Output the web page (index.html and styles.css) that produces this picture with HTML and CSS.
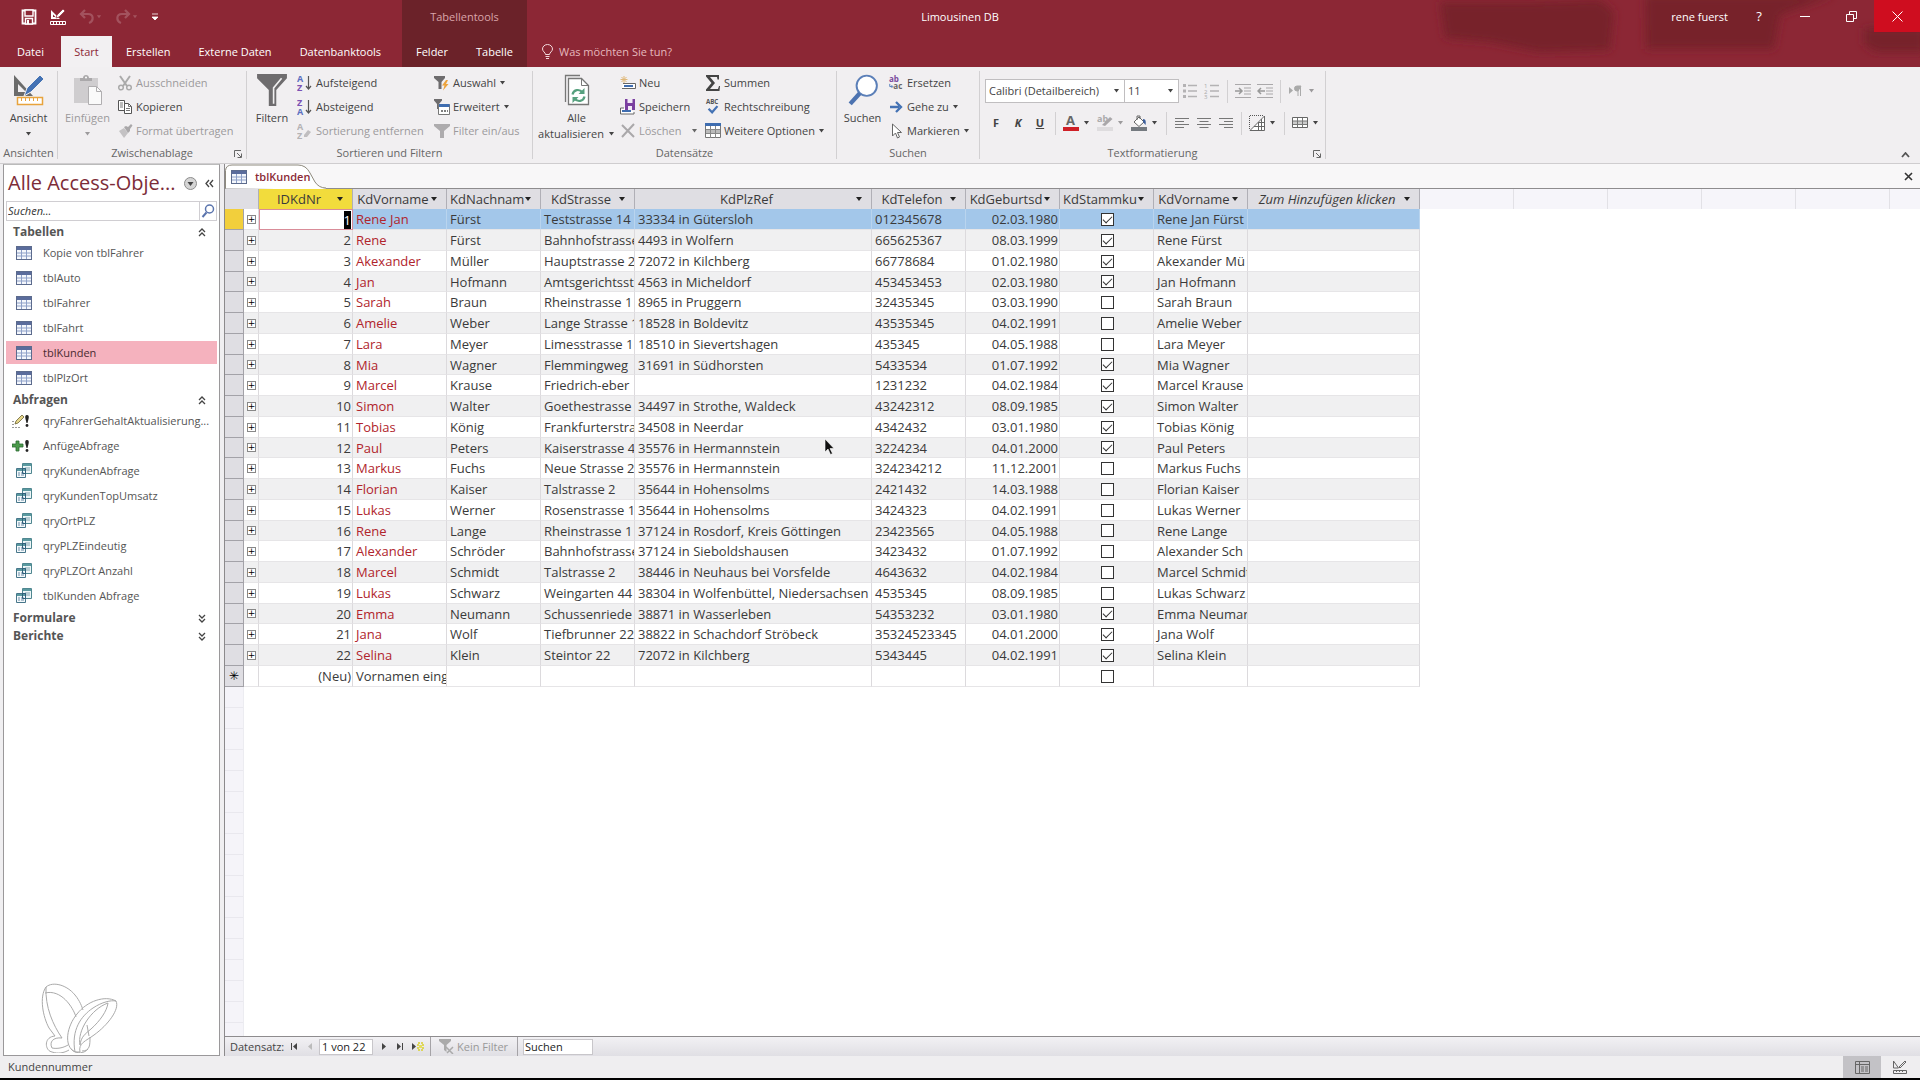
FILE: index.html
```html
<!DOCTYPE html>
<html lang="de">
<head>
<meta charset="utf-8">
<title>Limousinen DB</title>
<link rel="stylesheet" href="styles.css">
</head>
<body>
<svg class="sprite" aria-hidden="true">
  <symbol id="i-table" viewBox="0 0 16 14"><rect x=".5" y=".5" width="15" height="13" fill="#f4f7fc" stroke="#5c6b8d"/><path d="M1 1h14v3H1z" fill="#5a6c9c"/><path d="M1 7h14M1 10h14M5.5 4v9M10.500 4v9" stroke="#8da0c8" fill="none"/></symbol>
  <symbol id="i-query" viewBox="0 0 16 16"><path d="M6.500.5h9v10h-9z" fill="#eef6f8" stroke="#4f8790"/><path d="M7 1h8v2H7z" fill="#5a9aa0"/><path d="M9 5h5M9 7h5" stroke="#7fa3ae"/><path d="M.5 5.500h9v9h-9z" fill="#f4f9fb" stroke="#47768a"/><path d="M1 6h8v2H1z" fill="#5a9aa0"/><path d="M2 10h2m1 0h3M2 12h2m1 0h3" stroke="#6b8ba6"/><path d="M6.500 5.500h3v5h-3z" fill="none" stroke="#2f5f7a"/></symbol>
  <symbol id="i-upd" viewBox="0 0 18 16"><path d="M1 8v1M1 11v1M1 14v1M4 14v1M7 14v1" stroke="#333" fill="none"/><path d="m3 11 1-3 6-6 2 2-6 6z" fill="#e6d68a" stroke="#6a6236" stroke-width=".8"/><path d="M15 2c2 0 2 2 1.500 4L15.500 10h-1L13.500 6C13 4 13 2 15 2z" fill="#222"/><circle cx="15" cy="12.500" r="1.400" fill="#222"/></symbol>
  <symbol id="i-app" viewBox="0 0 18 16"><path d="M4 3h3v3h4v3H7v4H4V9H0V6h4z" fill="#4b9a4b" stroke="#2c6a32" stroke-width=".8"/><path d="M15 2c2 0 2 2 1.500 4L15.500 10h-1L13.500 6C13 4 13 2 15 2z" fill="#222"/><circle cx="15" cy="12.500" r="1.400" fill="#222"/></symbol>
  <symbol id="i-caret" viewBox="0 0 7 4"><path d="M1 0h5L3.500 3.500z" fill="currentColor"/></symbol>
  <symbol id="i-up" viewBox="0 0 8 9"><path d="m1 4 3-3 3 3M1 8l3-3 3 3" fill="none" stroke="#444" stroke-width="1.300"/></symbol>
  <symbol id="i-down" viewBox="0 0 8 9"><path d="m1 1 3 3 3-3M1 5l3 3 3-3" fill="none" stroke="#444" stroke-width="1.300"/></symbol>
  <symbol id="i-save" viewBox="0 0 16 16"><path d="M1.500 1.500h13v13h-13z" fill="none" stroke="currentColor" stroke-width="1.800"/><path d="M4 1h8v6H4zM4.500 9.500h7V15h-7z" fill="#8c2735" stroke="currentColor" stroke-width="1.400"/><path d="M6 11h2v4H6z" fill="currentColor"/></symbol>
  <symbol id="i-design" viewBox="0 0 16 16"><path d="M1 1v9h9zM3 5.500 5.500 8H3z" fill="currentColor" fill-rule="evenodd"/><path d="m6 9 1-3 6-6 2 2-6 6z" fill="currentColor" stroke="#8c2735" stroke-width=".7"/><path d="M.5 12.500h15v3H.5zM3.500 13v2m3-2v2m3-2v2m3-2v2" fill="none" stroke="currentColor"/></symbol>
  <symbol id="i-undo" viewBox="0 0 16 16"><path d="M6 1 2 5l4 4M2.500 5H9c6 0 6 7 1 9" fill="none" stroke="currentColor" stroke-width="2.200"/></symbol>
  <symbol id="i-view" viewBox="0 0 32 32"><path d="M1 1v21h19zM5 10l8 8H5z" fill="#6b6b6b" fill-rule="evenodd"/><path d="m11 22 3-8L27 1l4 4-13 13z" fill="#4472b4" stroke="#f0eff0"/><path d="M4.500 23.500h25v7h-25z" fill="#fff" stroke="#e8a33d" stroke-width="1.500"/><path d="M8.500 24v3m4-3v3m4-3v3m4-3v3m4-3v3" stroke="#e8a33d"/></symbol>
  <symbol id="i-paste" viewBox="0 0 32 32"><path d="M2 4h24v25H2z" fill="#cfcdcf"/><path d="M8 7V4h3c0-4 6-4 6 0h3v3z" fill="#aaa8aa"/><circle cx="14" cy="3.500" r="1" fill="#fff"/><path d="M16.500 12.500h8l5 5v13h-13z" fill="#fafafa" stroke="#b0aeb0"/><path d="M24.500 12.500v5h5" fill="none" stroke="#b0aeb0"/></symbol>
  <symbol id="i-cut" viewBox="0 0 16 16"><path d="M3 1l7 10M13 1 6 11" stroke="#aaa" stroke-width="2" fill="none"/><circle cx="4" cy="12.500" r="2.300" fill="none" stroke="#aaa" stroke-width="1.500"/><circle cx="12" cy="12.500" r="2.300" fill="none" stroke="#aaa" stroke-width="1.500"/></symbol>
  <symbol id="i-copy" viewBox="0 0 16 16"><path d="M1.500 1.500h6v10h-6z" fill="#fff" stroke="#555"/><path d="M3 4h3M3 6h3M3 8h3" stroke="#777"/><path d="M7.500 4.500h4l3 3v7h-7z" fill="#fff" stroke="#555"/><path d="M11.500 4.500v3h3M9 9.500h4M9 11.500h4" fill="none" stroke="#777"/></symbol>
  <symbol id="i-brush" viewBox="0 0 16 16"><path d="m2 8 5-3 4 5-4 5z" fill="#c4c2c4"/><path d="m7 4 2-1 2 1 3-3 1.500 1.500L13 6v2l-2 2z" fill="#a9a7a9"/></symbol>
  <symbol id="i-filter" viewBox="0 0 28 30"><path d="M0 0h28v4L18 15v15h-7V15L0 4z" fill="#6e6c6e"/><path d="M23 4 15.500 13v15" fill="none" stroke="#f0eff0" stroke-width="1.500"/></symbol>
  <symbol id="i-asc" viewBox="0 0 16 16"><text x="0" y="7" class="az blue">A</text><text x="0" y="16" class="az violet">Z</text><path d="M11.500 1v12M9 11l2.500 3 2.500-3" fill="none" stroke="#555" stroke-width="1.200"/></symbol>
  <symbol id="i-desc" viewBox="0 0 16 16"><text x="0" y="7" class="az violet">Z</text><text x="0" y="16" class="az blue">A</text><path d="M11.500 1v12M9 11l2.500 3 2.500-3" fill="none" stroke="#555" stroke-width="1.200"/></symbol>
  <symbol id="i-nosort" viewBox="0 0 16 16"><text x="0" y="7" class="az dim">A</text><text x="0" y="16" class="az dim">Z</text><path d="m7 12 4-5 3 2-4 5H7z" fill="#c0bec0"/></symbol>
  <symbol id="i-sel" viewBox="0 0 16 16"><path d="M0 1h11v2L7.500 7v7h-3V7L0 3z" fill="#6e6c6e"/><path d="M12 5 8 10.500h2.500L9 15.500l5.500-6.500H12l2-4z" fill="#eda33c"/></symbol>
  <symbol id="i-adv" viewBox="0 0 16 16"><path d="M0 0h8v1.500L5 5v5H3V5L0 1.500z" fill="#6e6c6e"/><path d="M4.500 5.500h11v10h-11z" fill="#fff" stroke="#777"/><path d="M5 5h10.500v3H5z" fill="#3f6db0"/><path d="M7 12h2m1 0h2m1 0h1" stroke="#555" stroke-width="1.500"/></symbol>
  <symbol id="i-tog" viewBox="0 0 16 16"><path d="M0 1h16v2l-6 5v7H6V8L0 3z" fill="#aeacae"/></symbol>
  <symbol id="i-refresh" viewBox="0 0 26 32"><path d="M1.500 28V1.500H16" fill="none" stroke="#777" stroke-width="1.300"/><path d="M4.500 4.500h13l7 7v19h-20z" fill="#fff" stroke="#777" stroke-width="1.300"/><path d="M17.500 4.500v7h7" fill="none" stroke="#777"/><path d="M8.500 20.500c1-5 7-6 10-2M20.500 22.500c-1 5-7 6-10 2" fill="none" stroke="#56a07e" stroke-width="2.200"/><path d="M20.500 14v6h-6zM8.500 29v-6h6z" fill="#56a07e"/></symbol>
  <symbol id="i-new" viewBox="0 0 16 16"><path d="M4 1v7M.5 4.500h7M1.500 2l5 5M6.500 2l-5 5" stroke="#e0b878" fill="none"/><path d="M3 8.500h12.500v5H2" fill="#fff" stroke="#666"/><path d="M4 10h9v2H4z" fill="#3f6db0"/></symbol>
  <symbol id="i-savrec" viewBox="0 0 16 16"><path d="M4 9H.5v6H14v-2" fill="#fff" stroke="#666"/><path d="M2 11h9v2H2z" fill="#3f6db0"/><path d="M5 0h10v11H5z" fill="#7a3fa0"/><path d="M7.500 0h5v4h-5zM8 7h4v4H8z" fill="#f2e9f7"/></symbol>
  <symbol id="i-del" viewBox="0 0 16 16"><path d="m2 2 12 12M14 1 2 14" stroke="#aaa8aa" stroke-width="2" fill="none"/></symbol>
  <symbol id="i-sum" viewBox="0 0 16 16"><path d="M1 0h13v4.500h-1.500L12 2H5l5 6-5 6h8l1-3h1l-.5 5H1v-1.500L6.500 8 1 1.500z" fill="#444"/></symbol>
  <symbol id="i-abc" viewBox="0 0 16 18"><text x="0" y="6" class="abc">ABC</text><path d="m3 11 4 4 6-7" fill="none" stroke="#4472b4" stroke-width="2.500"/></symbol>
  <symbol id="i-more" viewBox="0 0 16 16"><path d="M.5.5h15v14H.5z" fill="#fff" stroke="#777"/><path d="M0 0h16v3H0z" fill="#3f6db0"/><path d="M1 7h14v4H1z" fill="#bbb"/><path d="M1 6.500h14M1 10.500h14M5.500 3v12M10.500 3v12" stroke="#888"/></symbol>
  <symbol id="i-find" viewBox="0 0 28 30"><circle cx="17.500" cy="11" r="9.500" fill="#fff" stroke="#5b7fb8" stroke-width="1.800"/><path d="m11 18-9 10" stroke="#4d73b0" stroke-width="4" fill="none"/></symbol>
  <symbol id="i-repl" viewBox="0 0 16 18"><text x="0" y="8" class="ab violet2">ab</text><text x="5" y="16" class="ab gray">ac</text><path d="M1 10v3h3M3 11.500 4.500 13 3 14.500" fill="none" stroke="#4472b4"/></symbol>
  <symbol id="i-goto" viewBox="0 0 16 16"><path d="M2 8h9M8 3l5 5-5 5" fill="none" stroke="#4472b4" stroke-width="2.300"/></symbol>
  <symbol id="i-mark" viewBox="0 0 16 16"><path d="M4.500 1v12l3-3 2 5 2-1-2-4.500h4z" fill="#fff" stroke="#666"/></symbol>
  <symbol id="i-bul" viewBox="0 0 16 16"><path d="M6 2.500h9M6 8h9M6 13.500h9" stroke="#b4b2b4" stroke-width="1.300"/><path d="M1 1h3v3H1zM1 6.500h3v3H1zM1 12h3v3H1z" fill="#b4b2b4"/></symbol>
  <symbol id="i-num" viewBox="0 0 16 16"><path d="M6 2.500h9M6 8h9M6 13.500h9" stroke="#b4b2b4" stroke-width="1.300"/><text x="0" y="5" class="num">1</text><text x="0" y="10.500" class="num">2</text><text x="0" y="16" class="num">3</text></symbol>
  <symbol id="i-ind" viewBox="0 0 16 16"><path d="M0 1.500h16M9 5h7M9 8h7M9 11h7M0 14.500h16" stroke="#aaa8aa" stroke-width="1.200"/><path d="M0 8h7M4 5l3 3-3 3" stroke="#999" stroke-width="1.500" fill="none"/></symbol>
  <symbol id="i-out" viewBox="0 0 16 16"><path d="M0 1.500h16M9 5h7M9 8h7M9 11h7M0 14.500h16" stroke="#aaa8aa" stroke-width="1.200"/><path d="M8 8H1M4 5 1 8l3 3" stroke="#999" stroke-width="1.500" fill="none"/></symbol>
  <symbol id="i-para" viewBox="0 0 16 16"><path d="M1 4v7l4-3.500z" fill="#aaa"/><path d="M13 3H9a2 2 0 0 0 0 5h1zM10 3v10M12.500 3v10" fill="#aaa" stroke="#aaa"/></symbol>
  <symbol id="i-font" viewBox="0 0 16 16"><text x="3" y="10" class="fa">A</text><path d="M0 12h16v4H0z" fill="#cf1f26"/></symbol>
  <symbol id="i-hl" viewBox="0 0 16 16"><text x="0" y="7" class="ab gray2">ab</text><path d="m5 10 8-8 2.500 2L8 11z" fill="#a9a7a9"/><path d="M0 12h16v4H0z" fill="#dedcde"/></symbol>
  <symbol id="i-fill" viewBox="0 0 16 16"><path d="m3 7 5-5 5 5-5 4.500z" fill="#fff" stroke="#666"/><path d="M6 5V1h3v3" fill="none" stroke="#666"/><path d="M12 4c3 0 3 3 2.500 6L12 7z" fill="#3c5f9c"/><path d="M0 12h16v4H0z" fill="#757a80"/></symbol>
  <symbol id="i-al" viewBox="0 0 16 16"><path d="M1 3.500h14M1 6.500h9M1 9.500h14M1 12.500h9" stroke="#777"/></symbol>
  <symbol id="i-ac" viewBox="0 0 16 16"><path d="M1 3.500h14M3.500 6.500h9M1 9.500h14M3.500 12.500h9" stroke="#777"/></symbol>
  <symbol id="i-ar" viewBox="0 0 16 16"><path d="M1 3.500h14M6 6.500h9M1 9.500h14M6 12.500h9" stroke="#777"/></symbol>
  <symbol id="i-lines" viewBox="0 0 16 16"><path d="M1 .5h14M.5 1v14" stroke="#555" stroke-dasharray="1 1"/><path d="M1 15.500 15.500 1v14.500zM5 11.500h10M9.500 7v8M12.500 4v11M9 7.500h6" fill="#fff" stroke="#666"/></symbol>
  <symbol id="i-alt" viewBox="0 0 16 16"><path d="M.5 2.500h15v10H.5z" fill="#fff" stroke="#666"/><path d="M1 6h14v3.500H1z" fill="#ccc"/><path d="M1 6h14M1 9.500h14M5.500 3v9M10.500 3v9" stroke="#777"/></symbol>
  <symbol id="i-launch" viewBox="0 0 8 8"><path d="M.5 7V.5H7M3 3l4 4M7.500 3.500v4h-4" fill="none" stroke="#666"/></symbol>
</svg>

<header class="top">
  <svg class="backdrop" viewBox="0 0 500 67" aria-hidden="true"><g fill="#77242b" filter="url(#soft)"><path d="M20 2h90l70-2 14 12-4 38-70 2-50-10-45-4z"/><path d="M225-5h190l-55 20-6 34H226z"/><path d="M444 28h60v24h-48l-12-8z"/></g><defs><filter id="soft"><feGaussianBlur stdDeviation="4"/></filter></defs></svg>
  <div class="titlebar">
    <div class="title-left">
      <div class="qat">
        <button aria-label="Speichern"><svg class="i16"><use href="#i-save"/></svg></button>
        <button aria-label="Entwurfsansicht"><svg class="i16"><use href="#i-design"/></svg></button>
        <button class="faded" aria-label="Rückgängig"><svg class="i16"><use href="#i-undo"/></svg><svg class="caret"><use href="#i-caret"/></svg></button>
        <button class="faded" aria-label="Wiederholen"><svg class="i16 flip"><use href="#i-undo"/></svg><svg class="caret"><use href="#i-caret"/></svg></button>
        <button aria-label="Symbolleiste anpassen"><svg width="8" height="9" viewBox="0 0 8 9"><path d="M1 1h6M1 4l3 3 3-3z" fill="#fff" stroke="#fff" stroke-width=".8"/></svg></button>
      </div>
      <div class="context-label">Tabellentools</div>
    </div>
    <h1 class="app-title">Limousinen DB</h1>
    <div class="window-controls">
      <span class="user">rene fuerst</span>
      <button aria-label="Hilfe"><span class="help">?</span></button>
      <button aria-label="Minimieren"><svg width="10" height="10"><path d="M0 5.500h10" stroke="#fff"/></svg></button>
      <button aria-label="Verkleinern"><svg width="11" height="11" fill="none" stroke="#fff"><path d="M.5 3.500h7v7h-7zM3.500 3V.5h7v7H8"/></svg></button>
      <button class="close" aria-label="Schließen"><svg width="11" height="11"><path d="m.5.500 10 10m0-10-10 10" stroke="#fff"/></svg></button>
    </div>
  </div>
  <nav class="tabs">
    <div class="tabs-main">
      <button class="file">Datei</button><button class="active">Start</button><button>Erstellen</button><button>Externe Daten</button><button>Datenbanktools</button>
    </div>
    <div class="tabs-context"><button>Felder</button><button>Tabelle</button></div>
    <button class="tell"><svg width="11" height="15" viewBox="0 0 11 15" fill="none" stroke="#f3d9dc"><path d="M3.500 10.500c0-2-3-3-3-5.500a5 4.500 0 0 1 10 0c0 2.500-3 3.500-3 5.500zM3.500 12.500h4M4 14.500h3"/></svg>Was möchten Sie tun?</button>
  </nav>
</header>

<section class="ribbon">
  <div class="group g-view">
    <div class="tools"><button class="big"><svg class="i32"><use href="#i-view"/></svg>Ansicht<svg class="caret"><use href="#i-caret"/></svg></button></div>
    <div class="glabel">Ansichten</div>
  </div>
  <div class="group g-clip">
    <div class="tools">
      <button class="big off"><svg class="i32"><use href="#i-paste"/></svg>Einfügen<svg class="caret"><use href="#i-caret"/></svg></button>
      <div class="stack">
        <button class="off"><svg class="i16"><use href="#i-cut"/></svg>Ausschneiden</button>
        <button><svg class="i16"><use href="#i-copy"/></svg>Kopieren</button>
        <button class="off"><svg class="i16"><use href="#i-brush"/></svg>Format übertragen</button>
      </div>
    </div>
    <div class="glabel">Zwischenablage<button class="launch" aria-label="Zwischenablage öffnen"><svg width="8" height="8"><use href="#i-launch"/></svg></button></div>
  </div>
  <div class="group g-sort">
    <div class="tools">
      <button class="big"><svg class="i32"><use href="#i-filter"/></svg>Filtern</button>
      <div class="stack">
        <button><svg class="i16"><use href="#i-asc"/></svg>Aufsteigend</button>
        <button><svg class="i16"><use href="#i-desc"/></svg>Absteigend</button>
        <button class="off"><svg class="i16"><use href="#i-nosort"/></svg>Sortierung entfernen</button>
      </div>
      <div class="stack second">
        <button><svg class="i16"><use href="#i-sel"/></svg>Auswahl<svg class="caret"><use href="#i-caret"/></svg></button>
        <button><svg class="i16"><use href="#i-adv"/></svg>Erweitert<svg class="caret"><use href="#i-caret"/></svg></button>
        <button class="off"><svg class="i16"><use href="#i-tog"/></svg>Filter ein/aus</button>
      </div>
    </div>
    <div class="glabel">Sortieren und Filtern</div>
  </div>
  <div class="group g-rec">
    <div class="tools">
      <button class="big"><svg class="i32"><use href="#i-refresh"/></svg>Alle<span class="line2">aktualisieren<svg class="caret"><use href="#i-caret"/></svg></span></button>
      <div class="stack">
        <button><svg class="i16"><use href="#i-new"/></svg>Neu</button>
        <button><svg class="i16"><use href="#i-savrec"/></svg>Speichern</button>
        <button class="off wide"><svg class="i16"><use href="#i-del"/></svg>Löschen<svg class="caret"><use href="#i-caret"/></svg></button>
      </div>
      <div class="stack third">
        <button><svg class="i16"><use href="#i-sum"/></svg>Summen</button>
        <button><svg class="i16"><use href="#i-abc"/></svg>Rechtschreibung</button>
        <button><svg class="i16"><use href="#i-more"/></svg>Weitere Optionen<svg class="caret"><use href="#i-caret"/></svg></button>
      </div>
    </div>
    <div class="glabel">Datensätze</div>
  </div>
  <div class="group g-find">
    <div class="tools">
      <button class="big"><svg class="i32"><use href="#i-find"/></svg>Suchen</button>
      <div class="stack">
        <button><svg class="i16"><use href="#i-repl"/></svg>Ersetzen</button>
        <button><svg class="i16"><use href="#i-goto"/></svg>Gehe zu<svg class="caret"><use href="#i-caret"/></svg></button>
        <button><svg class="i16"><use href="#i-mark"/></svg>Markieren<svg class="caret"><use href="#i-caret"/></svg></button>
      </div>
    </div>
    <div class="glabel">Suchen</div>
  </div>
  <div class="group g-text">
    <div class="tools rows">
      <div class="row">
        <span class="combo font"><select aria-label="Schriftart"><option>Calibri (Detailbereich)</option></select><svg class="caret"><use href="#i-caret"/></svg></span>
        <span class="combo size"><select aria-label="Schriftgrad"><option>11</option></select><svg class="caret"><use href="#i-caret"/></svg></span>
        <button class="ib" aria-label="Aufzählungszeichen"><svg class="i16"><use href="#i-bul"/></svg></button>
        <button class="ib" aria-label="Nummerierung"><svg class="i16"><use href="#i-num"/></svg></button>
        <i class="sep"></i>
        <button class="ib" aria-label="Einzug vergrößern"><svg class="i16"><use href="#i-ind"/></svg></button>
        <button class="ib" aria-label="Einzug verkleinern"><svg class="i16"><use href="#i-out"/></svg></button>
        <i class="sep"></i>
        <button class="split off" aria-label="Textrichtung"><svg class="i16"><use href="#i-para"/></svg><svg class="caret"><use href="#i-caret"/></svg></button>
      </div>
      <div class="row">
        <button class="ib" aria-label="Fett"><b>F</b></button>
        <button class="ib" aria-label="Kursiv"><b><em>K</em></b></button>
        <button class="ib" aria-label="Unterstrichen"><b><u>U</u></b></button>
        <i class="sep"></i>
        <button class="split" aria-label="Schriftfarbe"><svg class="i16"><use href="#i-font"/></svg><svg class="caret"><use href="#i-caret"/></svg></button>
        <button class="split off" aria-label="Texthervorhebung"><svg class="i16"><use href="#i-hl"/></svg><svg class="caret"><use href="#i-caret"/></svg></button>
        <button class="split" aria-label="Hintergrundfarbe"><svg class="i16"><use href="#i-fill"/></svg><svg class="caret"><use href="#i-caret"/></svg></button>
        <i class="sep"></i>
        <button class="ib" aria-label="Linksbündig"><svg class="i16"><use href="#i-al"/></svg></button>
        <button class="ib" aria-label="Zentriert"><svg class="i16"><use href="#i-ac"/></svg></button>
        <button class="ib" aria-label="Rechtsbündig"><svg class="i16"><use href="#i-ar"/></svg></button>
        <i class="sep"></i>
        <button class="split" aria-label="Gitternetzlinien"><svg class="i16"><use href="#i-lines"/></svg><svg class="caret"><use href="#i-caret"/></svg></button>
        <i class="sep"></i>
        <button class="split" aria-label="Alternative Zeilenfarbe"><svg class="i16"><use href="#i-alt"/></svg><svg class="caret"><use href="#i-caret"/></svg></button>
      </div>
    </div>
    <div class="glabel">Textformatierung<button class="launch" aria-label="Datenblattformatierung"><svg width="8" height="8"><use href="#i-launch"/></svg></button></div>
  </div>
  <button class="collapse" aria-label="Menüband reduzieren"><svg width="9" height="6"><path d="m1 5 3.500-4L8 5" fill="none" stroke="#555" stroke-width="1.800"/></svg></button>
</section>

<main class="work">
  <aside class="pane">
    <div class="pane-head">
      <h2>Alle Access-Obje...</h2>
      <button aria-label="Kategorie wählen"><svg width="13" height="13"><circle cx="6.500" cy="6.500" r="6" fill="#d5d5d5" stroke="#8c8c8c"/><path d="M3.500 5h6l-3 4z" fill="#444"/></svg></button>
      <button aria-label="Bereich ausblenden"><svg width="9" height="9"><path d="M4 1 1 4.500 4 8M8 1 5 4.500 8 8" fill="none" stroke="#444" stroke-width="1.300"/></svg></button>
    </div>
    <div class="pane-search"><input type="text" placeholder="Suchen..." aria-label="Objekte suchen"><button aria-label="Suchen"><svg width="14" height="14"><circle cx="8.500" cy="5" r="4" fill="#fff" stroke="#5a74ad" stroke-width="1.500"/><path d="m5.500 8.500-4 4.500" stroke="#5a74ad" stroke-width="2"/></svg></button></div>
    <h3>Tabellen<svg width="8" height="9"><use href="#i-up"/></svg></h3>
    <ul>
      <li><a href="#"><svg class="i16"><use href="#i-table"/></svg>Kopie von tblFahrer</a></li>
      <li><a href="#"><svg class="i16"><use href="#i-table"/></svg>tblAuto</a></li>
      <li><a href="#"><svg class="i16"><use href="#i-table"/></svg>tblFahrer</a></li>
      <li><a href="#"><svg class="i16"><use href="#i-table"/></svg>tblFahrt</a></li>
      <li><a href="#" class="current"><svg class="i16"><use href="#i-table"/></svg>tblKunden</a></li>
      <li><a href="#"><svg class="i16"><use href="#i-table"/></svg>tblPlzOrt</a></li>
    </ul>
    <h3>Abfragen<svg width="8" height="9"><use href="#i-up"/></svg></h3>
    <ul>
      <li><a href="#" class="action"><svg class="i18"><use href="#i-upd"/></svg>qryFahrerGehaltAktualisierung...</a></li>
      <li><a href="#" class="action"><svg class="i18"><use href="#i-app"/></svg>AnfügeAbfrage</a></li>
      <li><a href="#"><svg class="i16"><use href="#i-query"/></svg>qryKundenAbfrage</a></li>
      <li><a href="#"><svg class="i16"><use href="#i-query"/></svg>qryKundenTopUmsatz</a></li>
      <li><a href="#"><svg class="i16"><use href="#i-query"/></svg>qryOrtPLZ</a></li>
      <li><a href="#"><svg class="i16"><use href="#i-query"/></svg>qryPLZEindeutig</a></li>
      <li><a href="#"><svg class="i16"><use href="#i-query"/></svg>qryPLZOrt Anzahl</a></li>
      <li><a href="#"><svg class="i16"><use href="#i-query"/></svg>tblKunden Abfrage</a></li>
    </ul>
    <h3>Formulare<svg width="8" height="9"><use href="#i-down"/></svg></h3>
    <h3>Berichte<svg width="8" height="9"><use href="#i-down"/></svg></h3>
    <svg class="butterfly" viewBox="0 0 78 70" fill="none" stroke="#aaa" aria-hidden="true"><path d="M5 4C12-2 26 2 34 12c5 6 7 12 8 15M5 4C-2 14 2 34 8 45l6 8M5 4c-1 20 7 38 16 51M4 10c16-4 28 14 31 24M14 53c-12 1-10 15-3 16 6 2 12 1 17-2M21 55c-9-1-13 4-10 10M11 65c5 1 11 0 16-3"/><path d="M34 69c-12-6-8-26 2-38C46 18 64 12 75 18c4 8-8 24-22 34-8 6-16 8-14 17zM34 69c-4-22 6-36 18-44 9-6 18-8 23-7M39 62C36 48 50 26 67 20c-1 8-8 18-17 26-6 5-10 8-11 16zM41 68c8 0 8-6 8-14M46 42l2 11M30 66c6 6 14 4 17 0"/></svg>
  </aside>

  <section class="doc">
    <div class="doc-tabs">
      <button class="doc-tab"><svg class="shape" viewBox="0 0 102 24"><path d="M.5 24V6Q1 .5 7 .5h66q8 0 12 8l5 9q4 6 11 6.500v1z" fill="#fff"/><path d="M.5 24V6Q1 .5 7 .5h66q8 0 12 8l5 9q4 6 11 6" fill="none" stroke="#8e8a7e"/></svg><svg class="i16"><use href="#i-table"/></svg><span>tblKunden</span></button>
      <button class="doc-close" aria-label="Dokument schließen"><svg width="9" height="9"><path d="m1 1 7 7m0-7L1 8" stroke="#333" stroke-width="1.600"/></svg></button>
    </div>
    <div class="sheet">
      <table>
        <colgroup><col class="c-rec"><col class="c-exp"><col class="c"><col class="c"><col class="c"><col class="c"><col class="c-plz"><col class="c"><col class="c"><col class="c"><col class="c"><col class="c-add"></colgroup>
        <thead><tr><td colspan="2" class="corner"></td>
          <th class="picked"><button><span>IDKdNr</span></button></th>
          <th><button><span>KdVorname</span></button></th>
          <th><button><span>KdNachnam</span></button></th>
          <th><button><span>KdStrasse</span></button></th>
          <th><button><span>KdPlzRef</span></button></th>
          <th><button><span>KdTelefon</span></button></th>
          <th><button><span>KdGeburtsd</span></button></th>
          <th><button><span>KdStammku</span></button></th>
          <th><button><span>KdVorname</span></button></th>
          <th><button><span><em>Zum Hinzufügen klicken</em></span></button></th></tr></thead>
        <tbody>
          <tr class="selected"><th><td><button>+</button><td class="cell"><mark>1</mark><td>Rene Jan<td>Fürst<td>Teststrasse 14<td>33334 in Gütersloh<td>012345678<td>02.03.1980<td><input type="checkbox" aria-label="Stammkunde 1" checked><td>Rene Jan Fürst<td></tr>
          <tr><th><td><button>+</button><td>2<td>Rene<td>Fürst<td>Bahnhofstrasse<td>4493 in Wolfern<td>665625367<td>08.03.1999<td><input type="checkbox" aria-label="Stammkunde 2" checked><td>Rene Fürst<td></tr>
          <tr><th><td><button>+</button><td>3<td>Akexander<td>Müller<td>Hauptstrasse 2<td>72072 in Kilchberg<td>66778684<td>01.02.1980<td><input type="checkbox" aria-label="Stammkunde 3" checked><td>Akexander Mü<td></tr>
          <tr><th><td><button>+</button><td>4<td>Jan<td>Hofmann<td>Amtsgerichtsst<td>4563 in Micheldorf<td>453453453<td>02.03.1980<td><input type="checkbox" aria-label="Stammkunde 4" checked><td>Jan Hofmann<td></tr>
          <tr><th><td><button>+</button><td>5<td>Sarah<td>Braun<td>Rheinstrasse 1<td>8965 in Pruggern<td>32435345<td>03.03.1990<td><input type="checkbox" aria-label="Stammkunde 5"><td>Sarah Braun<td></tr>
          <tr><th><td><button>+</button><td>6<td>Amelie<td>Weber<td>Lange Strasse 1<td>18528 in Boldevitz<td>43535345<td>04.02.1991<td><input type="checkbox" aria-label="Stammkunde 6"><td>Amelie Weber<td></tr>
          <tr><th><td><button>+</button><td>7<td>Lara<td>Meyer<td>Limesstrasse 1<td>18510 in Sievertshagen<td>435345<td>04.05.1988<td><input type="checkbox" aria-label="Stammkunde 7"><td>Lara Meyer<td></tr>
          <tr><th><td><button>+</button><td>8<td>Mia<td>Wagner<td>Flemmingweg<td>31691 in Südhorsten<td>5433534<td>01.07.1992<td><input type="checkbox" aria-label="Stammkunde 8" checked><td>Mia Wagner<td></tr>
          <tr><th><td><button>+</button><td>9<td>Marcel<td>Krause<td>Friedrich-eber<td><td>1231232<td>04.02.1984<td><input type="checkbox" aria-label="Stammkunde 9" checked><td>Marcel Krause<td></tr>
          <tr><th><td><button>+</button><td>10<td>Simon<td>Walter<td>Goethestrasse<td>34497 in Strothe, Waldeck<td>43242312<td>08.09.1985<td><input type="checkbox" aria-label="Stammkunde 10" checked><td>Simon Walter<td></tr>
          <tr><th><td><button>+</button><td>11<td>Tobias<td>König<td>Frankfurterstra<td>34508 in Neerdar<td>4342432<td>03.01.1980<td><input type="checkbox" aria-label="Stammkunde 11" checked><td>Tobias König<td></tr>
          <tr><th><td><button>+</button><td>12<td>Paul<td>Peters<td>Kaiserstrasse 4<td>35576 in Hermannstein<td>3224234<td>04.01.2000<td><input type="checkbox" aria-label="Stammkunde 12" checked><td>Paul Peters<td></tr>
          <tr><th><td><button>+</button><td>13<td>Markus<td>Fuchs<td>Neue Strasse 2<td>35576 in Hermannstein<td>324234212<td>11.12.2001<td><input type="checkbox" aria-label="Stammkunde 13"><td>Markus Fuchs<td></tr>
          <tr><th><td><button>+</button><td>14<td>Florian<td>Kaiser<td>Talstrasse 2<td>35644 in Hohensolms<td>2421432<td>14.03.1988<td><input type="checkbox" aria-label="Stammkunde 14"><td>Florian Kaiser<td></tr>
          <tr><th><td><button>+</button><td>15<td>Lukas<td>Werner<td>Rosenstrasse 1<td>35644 in Hohensolms<td>3424323<td>04.02.1991<td><input type="checkbox" aria-label="Stammkunde 15"><td>Lukas Werner<td></tr>
          <tr><th><td><button>+</button><td>16<td>Rene<td>Lange<td>Rheinstrasse 1<td>37124 in Rosdorf, Kreis Göttingen<td>23423565<td>04.05.1988<td><input type="checkbox" aria-label="Stammkunde 16"><td>Rene Lange<td></tr>
          <tr><th><td><button>+</button><td>17<td>Alexander<td>Schröder<td>Bahnhofstrasse<td>37124 in Sieboldshausen<td>3423432<td>01.07.1992<td><input type="checkbox" aria-label="Stammkunde 17"><td>Alexander Sch<td></tr>
          <tr><th><td><button>+</button><td>18<td>Marcel<td>Schmidt<td>Talstrasse 2<td>38446 in Neuhaus bei Vorsfelde<td>4643632<td>04.02.1984<td><input type="checkbox" aria-label="Stammkunde 18"><td>Marcel Schmidt<td></tr>
          <tr><th><td><button>+</button><td>19<td>Lukas<td>Schwarz<td>Weingarten 44<td>38304 in Wolfenbüttel, Niedersachsen<td>4535345<td>08.09.1985<td><input type="checkbox" aria-label="Stammkunde 19"><td>Lukas Schwarz<td></tr>
          <tr><th><td><button>+</button><td>20<td>Emma<td>Neumann<td>Schussenriede<td>38871 in Wasserleben<td>54353232<td>03.01.1980<td><input type="checkbox" aria-label="Stammkunde 20" checked><td>Emma Neumann<td></tr>
          <tr><th><td><button>+</button><td>21<td>Jana<td>Wolf<td>Tiefbrunner 22<td>38822 in Schachdorf Ströbeck<td>35324523345<td>04.01.2000<td><input type="checkbox" aria-label="Stammkunde 21" checked><td>Jana Wolf<td></tr>
          <tr><th><td><button>+</button><td>22<td>Selina<td>Klein<td>Steintor 22<td>72072 in Kilchberg<td>5343445<td>04.02.1991<td><input type="checkbox" aria-label="Stammkunde 22" checked><td>Selina Klein<td></tr>
          <tr class="new"><th>✳<td><td>(Neu)<td>Vornamen eing<td><td><td><td><td><td><input type="checkbox" aria-label="Stammkunde neu"><td><td></tr>
        </tbody>
      </table>
      <div class="gutter"></div>
      <svg class="pointer" width="11" height="18" viewBox="0 0 11 18"><path d="M1 1v13l3-3 2.500 5.500 2-1L6 10.500h4z" fill="#111" stroke="#fff" stroke-width=".6"/></svg>
    </div>
    <div class="recbar">
      <span class="reclabel">Datensatz:</span>
      <button aria-label="Erster"><svg width="8" height="9"><path d="M1 1h1v7H1zM7 1v7L3 4.500z" fill="#444"/></svg></button>
      <button aria-label="Vorheriger"><svg width="8" height="9"><path d="M6 1v7L2 4.500z" fill="#bbb"/></svg></button>
      <input class="pos" type="text" value="1 von 22" aria-label="Aktueller Datensatz">
      <button aria-label="Nächster"><svg width="8" height="9"><path d="M2 1v7l4-3.500z" fill="#444"/></svg></button>
      <button aria-label="Letzter"><svg width="8" height="9"><path d="M1 1v7l4-3.500zM6 1h1v7H6z" fill="#444"/></svg></button>
      <button class="add" aria-label="Neuer Datensatz"><svg width="13" height="9"><path d="M0 1v7l4-3.500z" fill="#444"/><path d="M6 1h5v7H6z" fill="none" stroke="#d9cf2e" stroke-width="1.500" stroke-dasharray="2 1"/><path d="M7 3h3v3H7z" fill="#e6df60"/></svg></button>
      <button class="nofilter"><svg width="16" height="15"><path d="M0 0h12v2L7.500 6v7L5 11V6L0 2z" fill="#aaa"/><path d="m7 8 7 7m0-7-6 6" stroke="#aaa" stroke-width="1.500"/></svg>Kein Filter</button>
      <input class="find" type="text" value="Suchen" aria-label="Im Datenblatt suchen">
    </div>
  </section>
</main>

<footer class="status">
  <span>Kundennummer</span>
  <div class="views">
    <button class="on" aria-label="Datenblattansicht"><svg width="15" height="13" fill="none" stroke="#666"><path d="M.5.500h14v12H.5zM.5 3.500h14M4.500.500v12M6 6h3m1 0h3M6 8h3m1 0h3M6 10h3m1 0h3"/></svg></button>
    <button aria-label="Entwurfsansicht"><svg width="15" height="14" fill="none" stroke="#666"><path d="M.5 1v7h5zM6 7l6-6 1 1-6 6zM.5 10.500h13v3H.5zM3.500 11v1m3-1v1m3-1v1"/></svg></button>
  </div>
</footer>
</body>
</html>
```
FILE: styles.css
```css
* { box-sizing: border-box; }

body {
  margin: 0;
  min-height: 100vh;
  display: flex;
  flex-direction: column;
  font: 11px/16px "Open Sans", "Noto Sans", sans-serif;
  color: #444;
  background: #f0eff1;
  border-bottom: 2px solid #000;
}

button {
  border: 0;
  padding: 0;
  background: none;
  font: inherit;
  color: inherit;
  display: flex;
  align-items: center;
}

input, select { font: inherit; color: #222; border: 0; padding: 0; background: #fff; border-radius: 0; }
h1, h2, h3, ul { margin: 0; padding: 0; font: inherit; list-style: none; }
a { color: inherit; text-decoration: none; }
svg { flex: none; display: block; }

.sprite { display: none; }
.i16 { width: 16px; height: 16px; }
.i18 { width: 18px; height: 16px; }
.i32 { width: 32px; height: 32px; }
.flip { transform: scaleX(-1); }
.caret { width: 7px; height: 4px; }

.az { font: bold 9px "Open Sans", sans-serif; }
.abc { font: bold 7px "Open Sans", sans-serif; fill: #555; }
.ab { font: bold 9px "Open Sans", sans-serif; }
.num { font: 6px "Open Sans", sans-serif; fill: #aaa; }
.fa { font: bold 13px "Open Sans", sans-serif; fill: #666; }
.blue { fill: #5b6fc0; }
.violet { fill: #7a52b3; }
.violet2 { fill: #7a4a9c; }
.dim { fill: #b5b3b5; }
.gray { fill: #666; }
.gray2 { fill: #aaa; }

/* Title bar and tabs */
.top { position: relative; background: #8c2735; color: #fff; }
.backdrop { position: absolute; right: 0; top: 0; width: 500px; height: 67px; }
.titlebar { position: relative; display: grid; grid-template-columns: 1fr auto 1fr; height: 36px; }
.title-left { display: flex; }
.qat { flex: 0 0 402px; display: flex; align-items: center; gap: 13px; padding: 0 0 2px 21px; }
.qat button { gap: 1px; }
.qat .caret { width: 6px; }
.faded { opacity: .2; }
.context-label { width: 125px; padding-top: 9px; text-align: center; background: #6b2229; color: #d9a5a9; }
.app-title { padding-top: 9px; }
.window-controls { display: flex; justify-content: flex-end; }
.user { padding: 9px 8px 0 0; }
.window-controls button { width: 46px; height: 32px; justify-content: center; }
.help { font-size: 13px; }
.window-controls .close { background: #cf0d1f; }

.tabs { position: relative; display: flex; height: 31px; }
.tabs-main { flex: 0 0 402px; display: flex; }
.tabs-context { width: 125px; display: flex; background: #6b2229; }
.tabs button { height: 31px; padding: 0 14px; white-space: nowrap; }
.tabs .file { width: 61px; justify-content: center; }
.tabs .active { width: 51px; justify-content: center; background: #f2f0f2; color: #8c2735; }
.tabs .tell { gap: 6px; padding-left: 15px; color: #e6b9bd; }

/* Ribbon */
.ribbon { position: relative; display: flex; height: 97px; padding: 4px 0; background: #f1eff1; border-bottom: 1px solid #cfcdcf; }
.group { display: flex; flex-direction: column; border-right: 1px solid #d2d0d2; }
.g-view { width: 58px; }
.g-clip { width: 189px; }
.g-sort { width: 286px; }
.g-rec { width: 304px; }
.g-find { width: 143px; }
.g-text { width: 346px; }
.tools { display: flex; height: 75px; }
.glabel { position: relative; height: 14px; text-align: center; color: #666; }
.launch { position: absolute; right: 4px; top: 5px; }
.big { flex: none; flex-direction: column; height: 72px; padding-top: 3px; white-space: nowrap; }
.big .i32 { margin-bottom: 4px; }
.big > .caret { margin-top: 6px; }
.line2 { display: flex; align-items: center; gap: 4px; }
.stack { flex: none; display: flex; flex-direction: column; }
.stack button { height: 24px; gap: 3px; white-space: nowrap; }
.off { color: #9c9a9c; }
.g-view .big { width: 57px; }
.g-clip .big { width: 59px; }
.g-sort .big { width: 50px; }
.g-sort .stack { width: 137px; }
.g-sort .second { width: 99px; }
.g-rec .big { width: 87px; }
.g-rec .stack { width: 85px; }
.wide .caret { margin-left: auto; margin-right: 7px; color: #666; }
.g-find .big { width: 51px; }

.rows { flex-direction: column; padding-left: 5px; }
.row { display: flex; align-items: center; height: 32px; }
.row:first-child { height: 36px; padding-top: 4px; }
.combo { position: relative; display: flex; height: 24px; border: 1px solid #c0bec0; background: #fff; }
.combo select { appearance: none; width: 100%; padding: 0 16px 0 3px; color: #444; }
.combo .caret { position: absolute; right: 4px; top: 9px; }
.combo.font { width: 140px; }
.combo.size { width: 55px; margin-left: -1px; }
.ib { width: 22px; height: 22px; justify-content: center; }
.split { width: 34px; height: 22px; padding-left: 3px; gap: 4px; }
.sep { width: 1px; height: 23px; margin: 0 4px; background: #d2d0d2; }
.collapse { position: absolute; right: 10px; bottom: 5px; }

/* Work area */
.work { flex: 1; display: flex; padding-left: 3px; }
.pane { position: relative; flex: 0 0 217px; min-width: 0; background: #fff; border: 1px solid #9a989a; border-top-color: #bbb; padding: 0 2px; }
.pane-head { display: flex; align-items: center; height: 36px; padding: 0 3px 0 2px; gap: 8px; }
.pane-head h2 { flex: 1; min-width: 0; font-size: 20px; line-height: 36px; color: #7d2c38; white-space: nowrap; }
.pane-search { display: flex; height: 20px; border: 1px solid #d0ced2; }
.pane-search input { flex: 1; min-width: 0; padding-left: 1px; }
.pane-search input::placeholder { color: #333; font-style: italic; opacity: 1; }
.pane-search button { width: 17px; justify-content: center; border-left: 1px solid #d0ced2; }
.pane h3 { display: flex; align-items: center; justify-content: space-between; height: 18px; padding: 0 11px 0 7px; font-size: 12px; font-weight: bold; color: #555; }
.pane-search + h3 { margin-top: 2px; }
.pane li { height: 25px; }
.pane a { display: flex; align-items: center; gap: 11px; height: 23px; padding-left: 10px; white-space: nowrap; color: #555; }
.pane .action { padding-left: 6px; gap: 13px; }
.pane .current { background: #f5b2be; color: #4a2a30; }
.butterfly { position: absolute; left: 37px; bottom: 2px; width: 78px; height: 70px; }

.doc { flex: 1; min-width: 0; margin-left: 4px; display: flex; flex-direction: column; border-left: 1px solid #8c8a8c; }
.doc-tabs { display: flex; justify-content: space-between; height: 25px; background: #f8f7f8; border-bottom: 1px solid #8e8c8e; }
.doc-tab { position: relative; width: 102px; height: 25px; padding: 0 0 0 6px; gap: 8px; font-weight: 600; color: #8a2a36; }
.doc-tab .i16, .doc-tab span { position: relative; }
.doc-tab .shape { position: absolute; left: 0; top: 0; width: 102px; height: 25px; }
.doc-close { padding: 0 7px; }

.sheet {
  position: relative;
  flex: 1;
  display: flex;
  flex-direction: column;
  background: linear-gradient(90deg, #e2e1e6 1px, transparent 1px) 1288px 0 / 94px 20px repeat-x, linear-gradient(#f6f5fa, #f6f5fa) 0 0 / 100% 20px no-repeat, #fff;
}
table { width: 1195px; table-layout: fixed; border-collapse: separate; border-spacing: 0; font: 13px/18px "Open Sans", "Noto Sans", sans-serif; color: #3a3a3a; }
.c-rec { width: 19px; }
.c-exp { width: 15px; }
.c { width: 94px; }
.c-plz { width: 237px; }
.c-add { width: 172px; }
td, th { height: 21px; padding: 0 2px; overflow: hidden; white-space: nowrap; font-weight: normal; text-align: left; border-right: 1px solid #dcdadd; border-bottom: 1px solid #e6e5e7; }
thead th, .corner { height: 20px; padding: 0; background: #dfdee3; border-right-color: #b0afb6; border-bottom: 0; }
thead th.picked { background: #f2dc3c; }
thead button { width: 100%; height: 20px; padding: 0 9px 0 3px; gap: 1px; }
thead span { flex: 1; min-width: 0; overflow: hidden; text-align: center; }
thead button::after { content: ""; border: 3px solid transparent; border-top: 4px solid #222; border-bottom: 0; }
tbody tr:nth-child(4n) > * { height: 20px; }
tbody tr:nth-child(even) td { background: #f0f0f1; }
tbody th { padding: 0; text-align: center; font-size: 12px; line-height: 16px; color: #000; background: #dfdee3; border-right-color: #a3a2a8; border-bottom-color: #a3a2a8; }
tbody td:nth-child(2) { padding: 0 0 0 3px; }
tbody td:nth-child(2) button { width: 9px; height: 9px; justify-content: center; border: 1px solid #888; background: #fff; font: 9px/7px "DejaVu Sans", sans-serif; color: #000; }
tbody td:nth-child(3), tbody td:nth-child(9) { text-align: right; padding-right: 1px; }
tbody td:nth-child(4) { color: #b0242c; }
tbody td:nth-child(10) { text-align: center; }
tbody td:nth-child(n+4) { padding-left: 3px; }
.selected th { background: #f2cf3c; }
.selected td:nth-child(n+4) { background: #a3c7ea; border-right-color: #b9d4ee; }
.selected .cell { border: 1px solid #d98c98; }
mark { display: inline-block; background: #000; color: #fff; }
tbody .new td { background: #fff; }
tbody .new td:nth-child(4) { color: #3a3a3a; }

input[type="checkbox"] { appearance: none; display: block; width: 13px; height: 13px; margin: 0 auto; border: 1px solid #333; background: #fff; }
input[type="checkbox"]:checked::before { content: ""; display: block; width: 8px; height: 4px; margin: 2px 0 0 1px; border: solid #333; border-width: 0 0 1px 1px; transform: rotate(-45deg); }

.gutter { flex: 1; width: 19px; background: repeating-linear-gradient(#f5f4f9 0 20px, #e9e8ee 20px 21px); border-right: 1px solid #ececf1; }
.pointer { position: absolute; left: 599px; top: 249px; }

.recbar { display: flex; align-items: center; height: 20px; padding-left: 5px; border-top: 1px solid #8e8c8e; background: linear-gradient(#f2f1f4, #e0dfe4); }
.reclabel { width: 60px; }
.recbar button { width: 16px; }
.recbar .pos { width: 54px; height: 16px; margin: 0 7px 0 -3px; padding-left: 2px; border: 1px solid #c8c6ca; }
.recbar .add { width: 18px; }
.recbar .nofilter { width: 88px; height: 19px; gap: 2px; padding-left: 8px; color: #999; border: solid #a5a3a7; border-width: 0 1px; }
.recbar .find { width: 70px; height: 16px; margin-left: 5px; padding-left: 1px; border: 1px solid #c8c6ca; }

.status { display: flex; justify-content: space-between; align-items: center; height: 22px; padding-left: 8px; background: #efeef0; }
.views { display: flex; }
.views button { width: 39px; height: 22px; justify-content: center; }
.views .on { width: 38px; background: #c3c2c6; }
```
